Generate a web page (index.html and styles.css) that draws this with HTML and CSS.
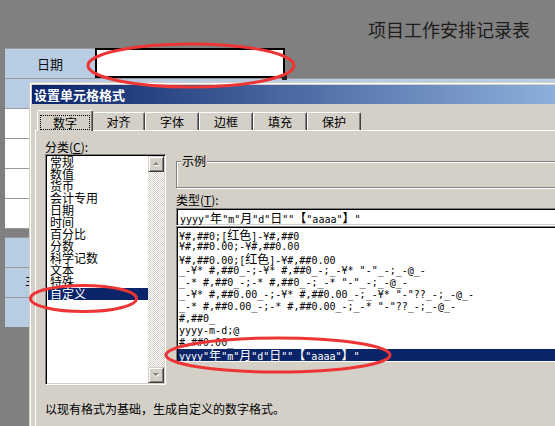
FILE: index.html
```html
<!DOCTYPE html>
<html>
  <head>
    <meta charset="utf-8" />
    <title>设置单元格格式</title>
    <link rel="stylesheet" href="styles.css">
  </head>

  <body>
    <div class="sheet">
      <div class="sheet-title">项目工作安排记录表</div>
      <div class="grid">
        <div class="row row-date">
          <div class="c-label">日期</div>
          <div class="c-value"></div>
        </div>
        <div class="row blue"></div>
        <div class="row white"></div>
        <div class="row white"></div>
        <div class="row white"></div>
        <div class="row white"></div>
        <div class="band"></div>
        <div class="row blue"></div>
        <div class="row blue"><span class="row-text">主</span></div>
        <div class="row blue"></div>
      </div>
    </div>

    <div class="dialog">
      <div class="titlebar">设置单元格格式</div>
      <div class="dlg-body">
        <div class="tabs">
          <div class="tab on"><span class="focus">数字</span></div>
          <div class="tab">对齐</div>
          <div class="tab">字体</div>
          <div class="tab">边框</div>
          <div class="tab">填充</div>
          <div class="tab">保护</div>
        </div>
        <div class="panel">
          <div class="panel-cols">
            <div class="col-cat">
              <span class="field-label">分类(<u>C</u>):</span>
              <div class="listbox">
                <div class="cat-items">
                  <div class="cat-item">常规</div>
                  <div class="cat-item">数值</div>
                  <div class="cat-item">货币</div>
                  <div class="cat-item">会计专用</div>
                  <div class="cat-item">日期</div>
                  <div class="cat-item">时间</div>
                  <div class="cat-item">百分比</div>
                  <div class="cat-item">分数</div>
                  <div class="cat-item">科学记数</div>
                  <div class="cat-item">文本</div>
                  <div class="cat-item">特殊</div>
                  <div class="cat-item sel">自定义</div>
                </div>
                <div class="vscroll">
                  <div class="sb-btn">
                    <svg width="7" height="5" viewBox="0 0 7 5"><path d="M1 4h6L4 1z" fill="#fff"/><path d="M0 3h6L3 0z" fill="#808080"/></svg>
                  </div>
                  <div class="sb-track"></div>
                  <div class="sb-btn">
                    <svg width="7" height="5" viewBox="0 0 7 5"><path d="M1 1h6L4 4z" fill="#fff"/><path d="M0 0h6L3 3z" fill="#808080"/></svg>
                  </div>
                </div>
              </div>
            </div>

            <div class="col-type">
              <span class="sample-title">示例</span>
              <div class="sample"></div>
              <span class="field-label type-label">类型(<u>T</u>):</span>
              <div class="type-input">
                <div class="fmt">yyyy"<span class="zh">年</span>"m"<span class="zh">月</span>"d"<span class="zh">日</span>""<span class="zh">【</span>"aaaa"<span class="zh">】</span>"</div>
              </div>
              <div class="type-list">
                <div class="fmt">¥#,##0;[<span class="zh">红色</span>]-¥#,##0</div>
                <div class="fmt">¥#,##0.00;-¥#,##0.00</div>
                <div class="fmt">¥#,##0.00;[<span class="zh">红色</span>]-¥#,##0.00</div>
                <div class="fmt">_-¥* #,##0_-;-¥* #,##0_-;_-¥* "-"_-;_-@_-</div>
                <div class="fmt">_-* #,##0_-;-* #,##0_-;_-* "-"_-;_-@_-</div>
                <div class="fmt">_-¥* #,##0.00_-;-¥* #,##0.00_-;_-¥* "-"??_-;_-@_-</div>
                <div class="fmt">_-* #,##0.00_-;-* #,##0.00_-;_-* "-"??_-;_-@_-</div>
                <div class="fmt">#,##0_</div>
                <div class="fmt">yyyy-m-d;@</div>
                <div class="fmt">#,##0.00_</div>
                <div class="fmt sel">yyyy"<span class="zh">年</span>"m"<span class="zh">月</span>"d"<span class="zh">日</span>""<span class="zh">【</span>"aaaa"<span class="zh">】</span>"</div>
              </div>
            </div>
          </div>
          <p class="hint">以现有格式为基础，生成自定义的数字格式。</p>
        </div>
      </div>
    </div>

    <!-- red marker rings drawn over the screenshot -->
    <svg class="marks" width="555" height="426" viewBox="0 0 555 426">
      <ellipse cx="191" cy="65.5" rx="103" ry="21.5" />
      <ellipse cx="83.5" cy="298.5" rx="53" ry="13" />
      <ellipse cx="278" cy="355" rx="112" ry="17" />
    </svg>
  </body>
</html>
```

FILE: styles.css
```css
body {
  margin: 0;
  width: 555px;
  height: 426px;
  overflow: hidden;
  position: relative;
  background: #808080;
  color: #000;
  font-family: "Noto Sans CJK SC", sans-serif;
  font-size: 12px;
}

/* spreadsheet behind the dialog */
.sheet-title {
  height: 48px;
  box-sizing: border-box;
  padding: 18px 25px 0 0;
  text-align: right;
  font-size: 18px;
  line-height: 22px;
  color: #1c1c1c;
}
.grid {
  margin-left: 5px;
}
.row {
  height: 29px;
  border-top: 1px solid #9a9a9a;
}
.row.blue {
  background: #b8cce4;
}
.row.white {
  background: #fff;
}
.row-date {
  display: flex;
  border-top: none;
  height: 30px;
}
.c-label {
  width: 90px;
  background: #b8cce4;
  border-top: 1px solid #9a9a9a;
  text-align: center;
  font-size: 13px;
  line-height: 30px;
  color: #111;
}
.c-value {
  width: 190px;
  box-sizing: border-box;
  background: #fff;
  border: 2px solid #000;
  position: relative;
}
.c-value::after {
  content: "";
  position: absolute;
  right: -4px;
  bottom: -4px;
  width: 5px;
  height: 5px;
  background: #222;
}
.band {
  height: 8px;
  border-top: 1px solid #9a9a9a;
}
.row-text {
  display: block;
  padding-left: 20px;
  font-size: 13px;
  line-height: 24px;
}

/* format cells dialog */
.dialog {
  position: absolute;
  left: 29px;
  top: 82px;
  width: 620px;
  height: 380px;
  padding: 2px;
  background: #d4d0c8;
  border: 1px solid #d4d0c8;
  box-shadow: inset 1px 1px #fff;
}
.titlebar {
  height: 19px;
  padding-left: 2px;
  line-height: 19px;
  font-size: 13px;
  font-weight: bold;
  color: #fff;
  background: linear-gradient(to right, #0a246a, #a6caf0);
}
.dlg-body {
  padding: 0 3px;
}
.tabs {
  display: flex;
  align-items: flex-end;
  height: 21px;
  margin: 6px 0 -1px;
  padding-left: 2px;
  position: relative;
  z-index: 1;
}
.tab {
  width: 54px;
  height: 18px;
  margin-bottom: 1px;
  box-sizing: border-box;
  border: 1px solid #fff;
  border-right-color: #404040;
  border-bottom: none;
  border-radius: 2px 2px 0 0;
  box-shadow: inset -1px 0 #808080;
  background: #d4d0c8;
  text-align: center;
  line-height: 17px;
}
.tab.on {
  width: 56px;
  height: 21px;
  margin-bottom: 0;
  padding: 4px 2px 0 2px;
}
.tab.on + .tab {
  width: 52px;
  border-left: none;
}
.focus {
  display: block;
  height: 15px;
  box-sizing: border-box;
  border: 1px dotted #000;
  line-height: 13px;
}
.panel {
  height: 300px;
  padding: 8px 0 0 9px;
  border-top: 1px solid #fff;
  border-left: 1px solid #fff;
  background: #d4d0c8;
}
.panel-cols {
  display: flex;
  gap: 10px;
}
.col-cat {
  width: 121px;
  flex: none;
}
.col-type {
  flex: 1;
}
.field-label {
  display: block;
  height: 15px;
  line-height: 15px;
}

.listbox,
.type-input,
.type-list {
  box-sizing: border-box;
  background: #fff;
  border: 1px solid;
  border-color: #808080 #fff #fff #808080;
  box-shadow: inset 1px 1px #000, inset -1px -1px #d4d0c8;
}
.listbox {
  display: flex;
  height: 231px;
  padding: 1px;
}
.cat-items {
  flex: 1;
  padding-left: 1px;
}
.cat-item {
  height: 12px;
  padding-left: 2px;
  line-height: 12px;
  white-space: nowrap;
}
.cat-item.sel,
.fmt.sel {
  background: #0a246a;
  color: #fff;
}
.vscroll {
  width: 16px;
  display: flex;
  flex-direction: column;
}
.sb-btn {
  height: 16px;
  box-sizing: border-box;
  display: flex;
  align-items: center;
  justify-content: center;
  background: #d4d0c8;
  border: 1px solid;
  border-color: #d4d0c8 #404040 #404040 #d4d0c8;
  box-shadow: inset 1px 1px #fff, inset -1px -1px #808080;
}
.sb-track {
  flex: 1;
  background: repeating-conic-gradient(#fff 0 25%, #d4d0c8 0 50%) 0 0 / 2px 2px;
}

.sample-title {
  display: block;
  width: fit-content;
  margin: 16px 0 0 5px;
  padding: 0 1px;
  line-height: 12px;
  background: #d4d0c8;
  position: relative;
  z-index: 1;
}
.sample {
  height: 27px;
  margin-top: -6px;
  box-sizing: border-box;
  border: 1px solid #808080;
  box-shadow: inset 1px 1px #fff, 1px 1px #fff;
}
.type-label {
  margin-top: 4px;
}
.type-input {
  height: 18px;
  margin-top: 1px;
  padding: 3px 0 0 2px;
}
.type-list {
  height: 136px;
  padding: 2px 1px;
  overflow: hidden;
}
.fmt {
  height: 12px;
  padding-left: 1px;
  line-height: 12px;
  white-space: pre;
  font-family: "DejaVu Sans Mono", monospace;
  font-size: 10px;
}
.fmt .zh {
  font-family: "Noto Sans CJK SC", sans-serif;
  font-size: 12px;
  line-height: 12px;
}
.hint {
  margin: 16px 0 0;
  line-height: 16px;
}

.marks {
  position: absolute;
  left: 0;
  top: 0;
  pointer-events: none;
}
.marks ellipse {
  fill: none;
  stroke: #ee3535;
  stroke-width: 3;
}
```
